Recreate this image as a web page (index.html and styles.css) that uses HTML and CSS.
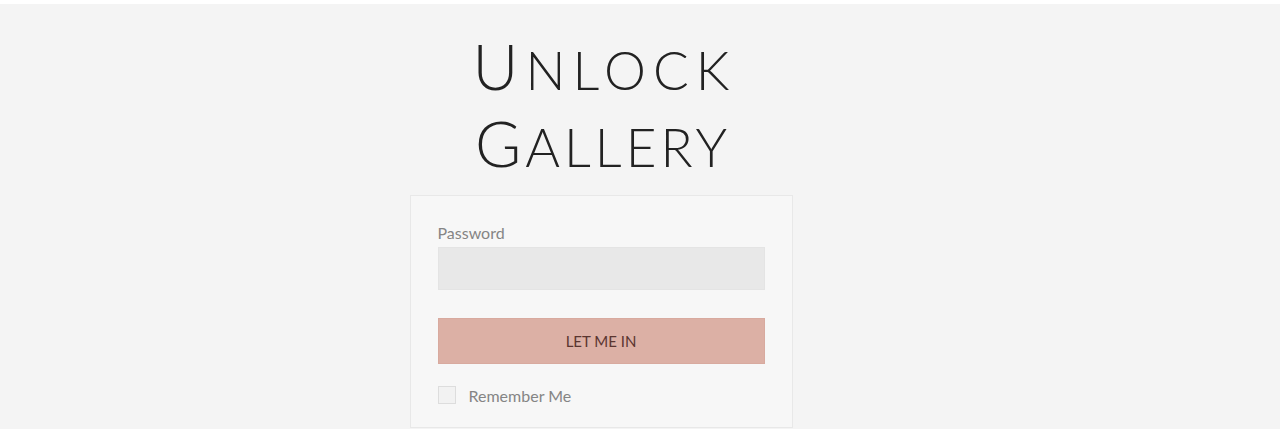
FILE: index.html
```html
<!DOCTYPE html>
<html>
<head>
<meta charset="utf-8">
<link rel="stylesheet" href="styles.css">
</head>
<body>
<div class="page">
  <main class="main">
    <div class="column">
      <h1 class="title">
        <span class="line line-wide"><span class="cap">U</span><span class="sc">nlock</span></span>
        <span class="line"><span class="cap">G</span><span class="sc">allery</span></span>
      </h1>
      <form class="card">
        <label class="label" for="pw">Password</label>
        <input class="input" id="pw" type="password">
        <button class="button" type="button">LET ME IN</button>
        <label class="remember"><span class="checkbox"></span><span class="remember-text">Remember Me</span></label>
      </form>
    </div>
  </main>
</div>
</body>
</html>
```

FILE: styles.css
```css
html, body {
  margin: 0;
  padding: 0;
  background: #ffffff;
}
body {
  font-family: "Lato", "Liberation Sans", sans-serif;
}
.page {
  padding-top: 4px;
  height: 433px;
  box-sizing: border-box;
  overflow: hidden;
}
.main {
  background: #f4f4f4;
  height: 425px;
  display: flex;
  justify-content: center;
  padding-right: 78px;
  box-sizing: border-box;
}
.column {
  width: 383px;
  display: flex;
  flex-direction: column;
  align-items: center;
}
.title {
  margin: 23px 0 14px;
  font-weight: 300;
  color: #222222;
  text-transform: uppercase;
  text-align: center;
  display: flex;
  flex-direction: column;
  align-items: center;
}
.line {
  display: block;
  font-size: 63px;
  line-height: 77px;
  height: 77px;
  letter-spacing: 4px;
  margin-right: -4px;
}
.line-wide {
  letter-spacing: 7px;
  margin-right: -7px;
}
.sc {
  font-size: 53px;
  line-height: 1;
}
.card {
  width: 383px;
  box-sizing: border-box;
  background: #f7f7f7;
  border: 1px solid #e8e8e8;
  padding: 27px 27px 23px;
  display: flex;
  flex-direction: column;
  margin: 0;
}
.label {
  font-size: 16px;
  line-height: 20px;
  color: #858585;
  margin-bottom: 4px;
}
.input {
  height: 43px;
  box-sizing: border-box;
  background: #e8e8e8;
  border: 1px solid #e4e4e4;
  margin: 0 0 28px;
  padding: 0 10px;
  outline: none;
}
.button {
  height: 46px;
  background: #dcb0a5;
  border: 1px solid #d8aa9f;
  color: #5a3530;
  font-family: "Lato", "Liberation Sans", sans-serif;
  font-size: 15px;
  margin: 0 0 22px;
  padding: 0;
}
.remember {
  display: flex;
  align-items: center;
  height: 18px;
}
.checkbox {
  width: 18px;
  height: 18px;
  box-sizing: border-box;
  border: 1px solid #dddddd;
  background: #f2f2f2;
  margin-right: 13px;
}
.remember-text {
  font-size: 16px;
  color: #858585;
}
```
